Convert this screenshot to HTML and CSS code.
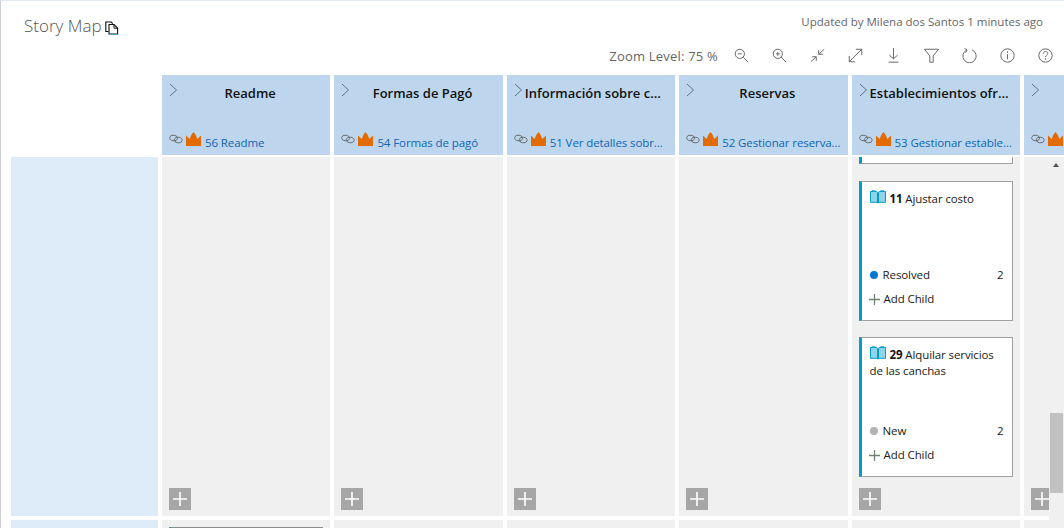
FILE: index.html
```html
<!DOCTYPE html>
<html lang="en">
<head>
<meta charset="utf-8">
<title>Story Map</title>
<link rel="stylesheet" href="styles.css">
</head>
<body>
<svg class="defs" width="0" height="0" aria-hidden="true">
  <defs>
    <symbol id="chev" viewBox="0 0 9 14"><path d="M1 1l6.5 6L1 13" fill="none" stroke="#5c6f8c" stroke-width="1"/></symbol>
    <symbol id="link" viewBox="0 0 14 10"><ellipse cx="4.6" cy="4" rx="3.9" ry="2.8" fill="none" stroke="#666" stroke-width=".9" transform="rotate(10 4.6 4)"/><ellipse cx="9.2" cy="6" rx="3.9" ry="2.8" fill="none" stroke="#666" stroke-width=".9" transform="rotate(10 9.2 6)"/></symbol>
    <symbol id="crown" viewBox="0 0 15 14"><path d="M0 3.500l3.600 3.500L5.600 2.500 7.500 0l1.900 2.500 2 4.500L15 3.500V14H0z" fill="#e26b00"/></symbol>
    <symbol id="book" viewBox="0 0 16 14"><path d="M.5 1.500h5.700c.8 0 1.300.4 1.300 1.200V13c-.4-.5-1-.7-1.700-.7H.5zM15.500 1.500H9.800c-.8 0-1.300.4-1.300 1.200V13c.4-.5 1-.7 1.700-.7h5.300z" fill="#8fd4ea" stroke="#009ccc"/><path d="M2 .8h3.500M10.500 .8H14" stroke="#009ccc" stroke-width="1"/></symbol>
    <symbol id="plus" viewBox="0 0 14 14"><path d="M7 0v14M0 7h14" stroke="currentColor" stroke-width="1.6" fill="none"/></symbol>
  </defs>
</svg>
<div class="app">
  <header class="top">
    <div class="title-wrap">
      <h1 class="page-title">Story Map</h1>
      <svg class="copy" width="14" height="14" viewBox="0 0 14 14"><path d="M3.500 10.500H.8V1h5.400l1.600 1.700" fill="none" stroke="#111" stroke-width="1.100"/><path d="M4 3.500h5l3.600 3.600V13H4z" fill="#fff" stroke="#111" stroke-width="1.100"/><path d="M9 3.500v3.700h3.600" fill="none" stroke="#111"/><path d="M4.500 13.400h8.600" stroke="#4aa3df"/></svg>
    </div>
    <div class="updated">Updated by Milena dos Santos 1 minutes ago</div>
  </header>
  <div class="toolbar">
    <span class="zoom-label">Zoom Level: 75 %</span>
    <span class="tool"><svg viewBox="0 0 18 18"><circle cx="7" cy="7" r="5.500" class="ic"/><path d="M4.700 7h4.600M11 11l6 6" class="ic"/></svg></span>
    <span class="tool"><svg viewBox="0 0 18 18"><circle cx="7" cy="7" r="5.500" class="ic"/><path d="M4.700 7h4.600M7 4.700v4.600M11 11l6 6" class="ic"/></svg></span>
    <span class="tool"><svg viewBox="0 0 18 18"><path d="M10.500 7.500L17 1.500M10.500 2.500v5h5M7.500 10.500L1 16.500M2.500 10.500h5v5" class="ic"/></svg></span>
    <span class="tool"><svg viewBox="0 0 18 18"><path d="M1.500 16.500l15-15M9.500 1.500h7v7M1.500 9.500v7h7" class="ic"/></svg></span>
    <span class="tool"><svg viewBox="0 0 18 18"><path d="M9 0v13M4 8.500L9 13l5-4.500M3 17h12" class="ic"/></svg></span>
    <span class="tool"><svg viewBox="0 0 18 18"><path d="M.5 1.500h17L11 9.500V17H7V9.500z" class="ic"/></svg></span>
    <span class="tool"><svg viewBox="0 0 18 18"><path d="M6 2.300a8 8 0 1 0 6 0M3 .5l3 1.800L4.500 5.500" class="ic"/></svg></span>
    <span class="tool"><svg viewBox="0 0 18 18"><circle cx="9" cy="9" r="8" class="ic"/><path d="M9 7.500v6M9 4v1.800" class="ic"/></svg></span>
    <span class="tool"><svg viewBox="0 0 18 18"><circle cx="9" cy="9" r="8" class="ic"/><path d="M6.300 6.800c0-3.400 5.400-3.400 5.400-.2 0 2.100-2.700 2.100-2.700 4.400M9 12.300v1.800" class="ic"/></svg></span>
  </div>
  <div class="board">
    <div class="corner"></div>

    <div class="head">
      <div class="head-top"><svg class="chev"><use href="#chev"/></svg><span class="head-title">Readme</span></div>
      <div class="head-foot"><svg class="link"><use href="#link"/></svg><svg class="crown"><use href="#crown"/></svg><span class="head-link">56 Readme</span></div>
    </div>
    <div class="head">
      <div class="head-top"><svg class="chev"><use href="#chev"/></svg><span class="head-title">Formas de Pagó</span></div>
      <div class="head-foot"><svg class="link"><use href="#link"/></svg><svg class="crown"><use href="#crown"/></svg><span class="head-link">54 Formas de pagó</span></div>
    </div>
    <div class="head">
      <div class="head-top"><svg class="chev"><use href="#chev"/></svg><span class="head-title">Información sobre canchas</span></div>
      <div class="head-foot"><svg class="link"><use href="#link"/></svg><svg class="crown"><use href="#crown"/></svg><span class="head-link">51 Ver detalles sobre canchas</span></div>
    </div>
    <div class="head">
      <div class="head-top"><svg class="chev"><use href="#chev"/></svg><span class="head-title">Reservas</span></div>
      <div class="head-foot"><svg class="link"><use href="#link"/></svg><svg class="crown"><use href="#crown"/></svg><span class="head-link">52 Gestionar reservas de canchas</span></div>
    </div>
    <div class="head">
      <div class="head-top"><svg class="chev"><use href="#chev"/></svg><span class="head-title">Establecimientos ofrecidos</span></div>
      <div class="head-foot"><svg class="link"><use href="#link"/></svg><svg class="crown"><use href="#crown"/></svg><span class="head-link">53 Gestionar establecimientos</span></div>
    </div>
    <div class="head">
      <div class="head-top"><svg class="chev"><use href="#chev"/></svg><span class="head-title">Calificaciones</span></div>
      <div class="head-foot"><svg class="link"><use href="#link"/></svg><svg class="crown"><use href="#crown"/></svg><span class="head-link">55 Calificar</span></div>
    </div>

    <div class="lane"></div>
    <div class="cell"><button class="add"><svg class="add-ic"><use href="#plus"/></svg></button></div>
    <div class="cell"><button class="add"><svg class="add-ic"><use href="#plus"/></svg></button></div>
    <div class="cell"><button class="add"><svg class="add-ic"><use href="#plus"/></svg></button></div>
    <div class="cell"><button class="add"><svg class="add-ic"><use href="#plus"/></svg></button></div>
    <div class="cell">
      <div class="card-tail"></div>
      <article class="card">
        <div class="card-title"><svg class="book"><use href="#book"/></svg> <b>11</b> Ajustar costo</div>
        <div class="status"><i class="dot dot-resolved"></i><span class="status-text">Resolved</span><span>2</span></div>
        <div class="child"><svg class="child-ic"><use href="#plus"/></svg>Add Child</div>
      </article>
      <article class="card">
        <div class="card-title"><svg class="book"><use href="#book"/></svg> <b>29</b> Alquilar servicios de las canchas</div>
        <div class="status"><i class="dot dot-new"></i><span class="status-text">New</span><span>2</span></div>
        <div class="child"><svg class="child-ic"><use href="#plus"/></svg>Add Child</div>
      </article>
      <button class="add"><svg class="add-ic"><use href="#plus"/></svg></button>
    </div>
    <div class="cell"><button class="add"><svg class="add-ic"><use href="#plus"/></svg></button></div>

    <div class="lane"></div>
    <div class="cell"><div class="card-top"></div></div>
    <div class="cell"></div>
    <div class="cell"></div>
    <div class="cell"></div>
    <div class="cell"></div>
    <div class="cell"></div>

    <div class="scrollbar"><span class="arrow"></span><span class="thumb"></span></div>
  </div>
</div>
</body>
</html>
```
FILE: styles.css
```css
* { box-sizing: border-box; }
html, body { margin: 0; padding: 0; background: #fff; }
body { font-family: "Open Sans", "Noto Sans", sans-serif; color: #222; }
.defs { position: absolute; }
.app {
  width: 1064px;
  height: 528px;
  overflow: hidden;
  border-top: 1px solid #deebf7;
  border-left: 1px solid #cfcfcf;
  display: flex;
  flex-direction: column;
}
.top {
  height: 35px;
  flex: none;
  display: flex;
  justify-content: space-between;
  padding: 13px 21px 0 23px;
}
.title-wrap { display: flex; align-items: center; gap: 3px; height: 24px; }
.page-title {
  margin: 0;
  font-size: 17px;
  font-weight: 300;
  color: #555;
  line-height: 24px;
}
.copy { margin-top: 3px; }
.updated { font-size: 11.5px; color: #666; line-height: 16px; }
.toolbar {
  height: 39px;
  flex: none;
  display: flex;
  justify-content: flex-end;
  align-items: center;
}
.zoom-label { font-size: 13px; color: #666; margin-right: 4px; letter-spacing: .2px; }
.tool { width: 38px; display: flex; justify-content: center; }
.tool svg { width: 15px; height: 15px; }
.ic { fill: none; stroke: #6a6a6a; stroke-width: 1.2; }
.board {
  position: relative;
  flex: 1;
  min-height: 0;
  overflow: hidden;
  display: grid;
  grid-template-columns: 147px repeat(6, 168.4px);
  grid-template-rows: 78px 359px 60px;
  column-gap: 4px;
  row-gap: 4px;
  padding-left: 10px;
}
.corner { background: #fff; }
.head {
  background: #bdd6ee;
  display: flex;
  flex-direction: column;
  justify-content: space-between;
  min-width: 0;
  height: 80px;
  padding: 8px 0 3px;
}
.head-top { display: flex; align-items: flex-start; height: 24px; }
.chev { width: 9px; height: 14px; margin-left: 7px; margin-right: 2px; flex: none; }
.head-title {
  flex: 1;
  min-width: 0;
  margin-right: 10px;
  font-size: 13px;
  font-weight: 600;
  line-height: 20px;
  color: #111;
  text-align: center;
  white-space: nowrap;
  overflow: hidden;
  text-overflow: ellipsis;
}
.head-foot { display: flex; align-items: center; height: 20px; padding: 0 7px; }
.link { width: 14px; height: 10px; flex: none; margin-top: -6px; }
.crown { width: 15px; height: 14px; flex: none; margin: -6px 4px 0 3px; }
.head-link {
  flex: 1;
  min-width: 0;
  font-size: 11.5px;
  color: #0f66b3;
  white-space: nowrap;
  overflow: hidden;
  text-overflow: ellipsis;
  letter-spacing: -.1px;
}
.lane { background: #deebf8; }
.cell {
  background: #f0f0f0;
  min-width: 0;
  overflow: hidden;
  display: flex;
  flex-direction: column;
  padding: 0 7px 6px;
}
.card-tail {
  flex: none;
  height: 7px;
  background: #fff;
  border: 1px solid #a0a0a0;
  border-top: 0;
  border-left: 3px solid #009ccc;
  margin-bottom: 17px;
}
.card {
  flex: none;
  height: 140px;
  width: 154px;
  background: #fff;
  border: 1px solid #a0a0a0;
  border-left: 3px solid #009ccc;
  padding: 8px 8px 13px 8px;
  display: flex;
  flex-direction: column;
  font-size: 11.5px;
  line-height: 16px;
  color: #1a1a1a;
  letter-spacing: -.1px;
}
.card + .card { margin-top: 16px; }
.card-title { flex: 1; }
.card-title b { font-weight: 700; color: #111; }
.book { width: 16px; height: 14px; vertical-align: -1px; margin-right: 1px; }
.status { display: flex; align-items: center; height: 16px; margin-bottom: 8px; }
.status-text { flex: 1; }
.dot { width: 8px; height: 8px; border-radius: 50%; margin-right: 5px; flex: none; }
.dot-resolved { background: #0078d4; }
.dot-new { background: #b2b2b2; }
.child { display: flex; align-items: center; height: 16px; }
.child-ic { width: 11px; height: 11px; color: #6f8272; margin: 0 4px 0 -1px; }
.add {
  margin-top: auto;
  width: 22px;
  height: 22px;
  flex: none;
  padding: 0;
  border: 0;
  background: #a6a6a6;
  color: #fff;
  display: flex;
  align-items: center;
  justify-content: center;
}
.add-ic { width: 14px; height: 14px; }
.card-top {
  flex: none;
  width: 154px;
  height: 40px;
  margin-top: 7px;
  background: #fff;
  border-top: 1px solid #8c8c8c;
  border-left: 3px solid #009ccc;
}
.scrollbar {
  position: absolute;
  top: 82px;
  right: 0;
  bottom: 0;
  width: 15px;
  background: #f0f0f0;
}
.arrow {
  position: absolute;
  top: 6px;
  left: 4px;
  border-left: 3.5px solid transparent;
  border-right: 3.5px solid transparent;
  border-bottom: 4px solid #505050;
}
.thumb {
  position: absolute;
  top: 256px;
  left: 1px;
  width: 13px;
  height: 80px;
  background: #c1c1c1;
}
```
